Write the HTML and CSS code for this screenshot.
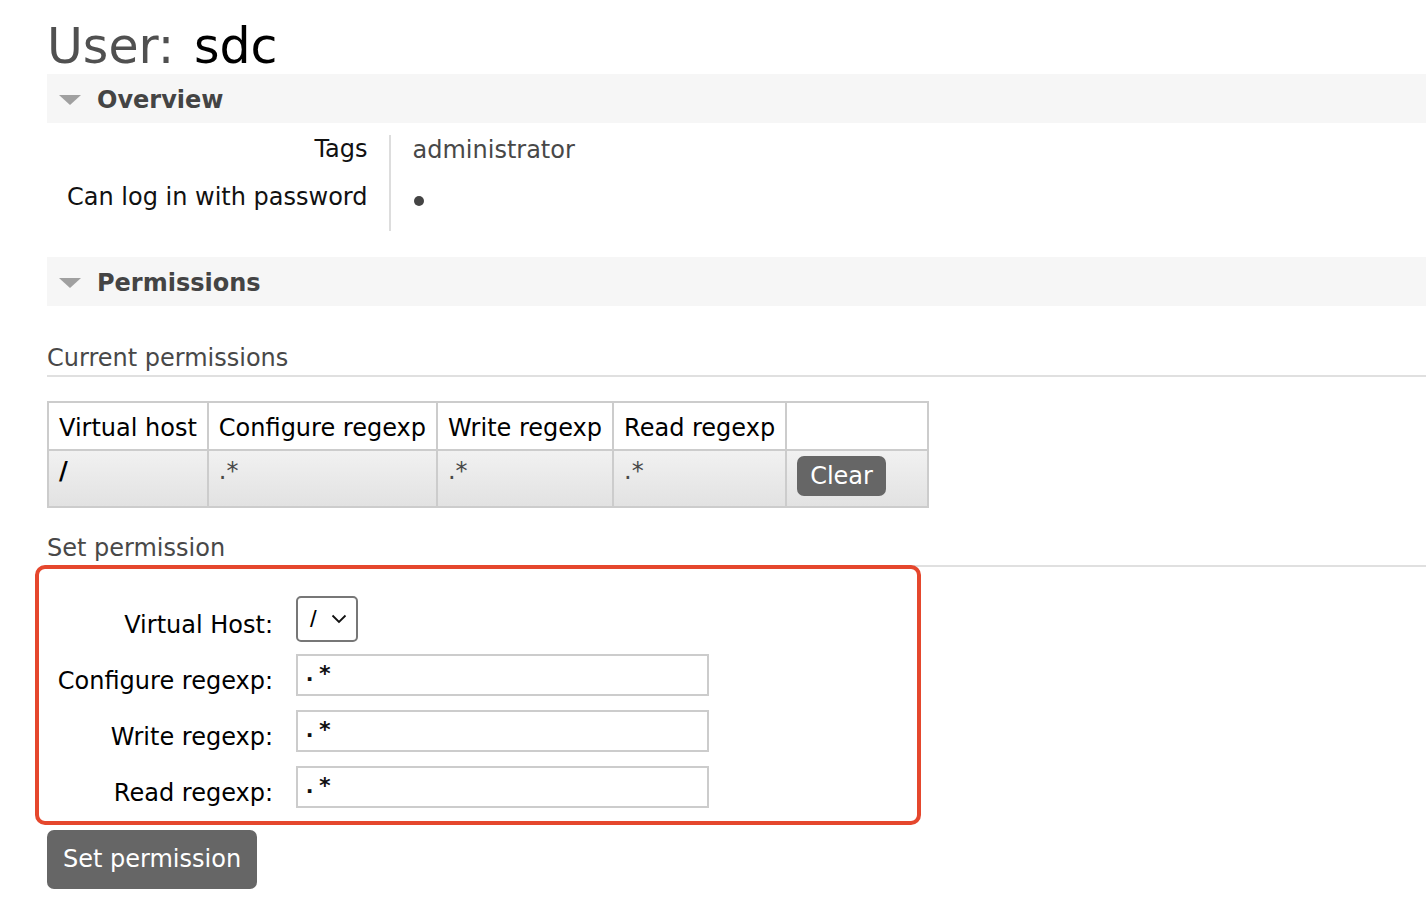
FILE: index.html
```html
<!DOCTYPE html>
<html>
<head>
<meta charset="utf-8">
<title>User: sdc</title>
<link rel="stylesheet" href="styles.css">
</head>
<body>
<div class="page">
  <h1 class="title">User: <span class="name">sdc</span></h1>

  <div class="section-head">
    <span class="tri"></span>
    <span class="section-title">Overview</span>
  </div>
  <table class="facts">
    <tr><th>Tags</th><td>administrator</td></tr>
    <tr><th>Can log in with password</th><td><span class="dot"></span></td></tr>
  </table>

  <div class="section-head perm-head">
    <span class="tri"></span>
    <span class="section-title">Permissions</span>
  </div>

  <h3 class="sub">Current permissions</h3>
  <table class="list">
    <thead>
      <tr><th>Virtual host</th><th>Configure regexp</th><th>Write regexp</th><th>Read regexp</th><th class="act"></th></tr>
    </thead>
    <tbody>
      <tr>
        <td class="vh">/</td>
        <td>.*</td>
        <td>.*</td>
        <td>.*</td>
        <td class="act"><button class="btn small">Clear</button></td>
      </tr>
    </tbody>
  </table>

  <h3 class="sub set">Set permission</h3>
  <div class="form-box">
    <div class="form-grid">
      <label class="lbl">Virtual Host:</label>
      <div class="select"><span class="sel-val">/</span><svg class="chev" width="16" height="10" viewBox="0 0 16 10"><path d="M1.5 1.5 L8 8 L14.5 1.5" fill="none" stroke="#111" stroke-width="1.8"/></svg></div>
      <label class="lbl">Configure regexp:</label>
      <div class="input">.*</div>
      <label class="lbl">Write regexp:</label>
      <div class="input">.*</div>
      <label class="lbl">Read regexp:</label>
      <div class="input">.*</div>
    </div>
  </div>
  <button class="btn big">Set permission</button>
</div>
</body>
</html>
```
FILE: styles.css
```css
html, body {
  margin: 0;
  padding: 0;
  background: #fff;
}
body {
  font-family: "DejaVu Sans", Verdana, sans-serif;
  font-size: 24px;
  color: #000;
}
.page {
  padding-left: 47px;
}
.title {
  margin: 20px 0 0;
  font-size: 49px;
  line-height: 54px;
  font-weight: normal;
  color: #505050;
}
.title .name {
  color: #000;
  margin-left: 4px;
}
.section-head {
  display: flex;
  align-items: center;
  height: 49px;
  background: #f6f6f6;
  padding-left: 12px;
}
.tri {
  width: 0;
  height: 0;
  border-left: 11px solid transparent;
  border-right: 11px solid transparent;
  border-top: 10px solid #a0a0a0;
  margin-right: 16px;
  margin-top: 2px;
}
.section-title {
  font-weight: bold;
  color: #444;
  line-height: 28px;
  padding-top: 2px;
}
.facts {
  border-collapse: collapse;
  margin-top: 12px;
}
.facts th {
  font-weight: normal;
  text-align: right;
  line-height: 28px;
  padding: 0 21px 20px 20px;
  vertical-align: top;
  color: #111;
}
.facts td {
  border-left: 2px solid #ddd;
  line-height: 28px;
  padding: 1px 20px 19px 22px;
  vertical-align: top;
  color: #484848;
}
.dot {
  display: inline-block;
  width: 10px;
  height: 10px;
  border-radius: 50%;
  background: #444;
  margin-left: 1px;
  vertical-align: 0px;
}
.perm-head {
  margin-top: 26px;
}
.sub {
  margin: 38px 0 0;
  font-size: 24px;
  font-weight: normal;
  line-height: 28px;
  color: #484848;
  padding-bottom: 3px;
  border-bottom: 2px solid #e0e0e0;
}
.list {
  border-collapse: collapse;
  margin-top: 24px;
}
.list th {
  font-weight: normal;
  text-align: left;
  border: 2px solid #ccc;
  padding: 3px 10px 0;
  height: 43px;
  line-height: 28px;
  background: #fff;
  color: #000;
}
.list td {
  border: 2px solid #ccc;
  padding: 3px 10px 10px;
  vertical-align: top;
  line-height: 34px;
  color: #484848;
  background: linear-gradient(#f1f1f1, #e2e2e2);
}
.list td.vh {
  font-weight: bold;
  color: #000;
}
.list .act {
  width: 120px;
}
.btn {
  font-family: "DejaVu Sans", Verdana, sans-serif;
  font-size: 24px;
  color: #fff;
  background: #666;
  border: none;
  border-radius: 7px;
  cursor: pointer;
}
.btn.small {
  height: 40px;
  padding: 0 13px;
  margin-top: 2px;
  line-height: 40px;
}
.sub.set {
  margin-top: 26px;
  padding-bottom: 3px;
}
.form-box {
  margin: -2px 0 0 -12px;
  width: 886px;
  box-sizing: border-box;
  border: 4px solid #e5472d;
  border-radius: 10px;
  padding: 27px 0 13px 0;
}
.form-grid {
  display: grid;
  grid-template-columns: 234px 413px;
  column-gap: 23px;
  row-gap: 14px;
  align-items: end;
}
.lbl {
  text-align: right;
  color: #000;
  line-height: 28px;
  padding-bottom: 1px;
}
.select {
  box-sizing: border-box;
  width: 62px;
  height: 46px;
  border: 2px solid #777;
  border-radius: 5px;
  display: flex;
  align-items: center;
  padding-left: 12px;
  margin-bottom: -2px;
}
.sel-val {
  font-family: "Liberation Sans", Arial, sans-serif;
  font-size: 24px;
  margin-right: 14px;
}
.input {
  box-sizing: border-box;
  width: 413px;
  height: 42px;
  border: 2px solid #ccc;
  font-family: "DejaVu Sans Mono", monospace;
  font-size: 22px;
  font-weight: bold;
  line-height: 36px;
  padding-left: 5px;
  letter-spacing: 2px;
  color: #111;
}
.btn.big {
  margin-top: 5px;
  height: 59px;
  padding: 0 16px;
  line-height: 59px;
}
```
